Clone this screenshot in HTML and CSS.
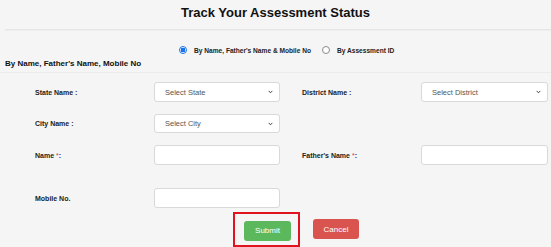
FILE: index.html
```html
<!DOCTYPE html>
<html>
<head>
<meta charset="utf-8">
<link rel="stylesheet" href="styles.css">
</head>
<body>
<h2 class="title">Track Your Assessment Status</h2>
<div class="divider"></div>
<div class="modes">
  <label class="mode"><span class="radio checked"></span><span>By Name, Father's Name &amp; Mobile No</span></label>
  <label class="mode"><span class="radio"></span><span>By Assessment ID</span></label>
</div>
<div class="subhead">By Name, Father's Name, Mobile No</div>
<div class="divider2"></div>
<div class="form">
  <div class="row r1">
    <div class="lbl left">State Name :</div>
    <div class="ctl sel left-ctl"><span>Select State</span><svg width="5" height="4" viewBox="0 0 5 4"><path d="M0.7 0.9 L2.5 2.8 L4.3 0.9" fill="none" stroke="#444" stroke-width="1"/></svg></div>
    <div class="lbl right">District Name :</div>
    <div class="ctl sel right-ctl"><span>Select District</span><svg width="5" height="4" viewBox="0 0 5 4"><path d="M0.7 0.9 L2.5 2.8 L4.3 0.9" fill="none" stroke="#444" stroke-width="1"/></svg></div>
  </div>
  <div class="row r2">
    <div class="lbl left">City Name :</div>
    <div class="ctl sel left-ctl"><span>Select City</span><svg width="5" height="4" viewBox="0 0 5 4"><path d="M0.7 0.9 L2.5 2.8 L4.3 0.9" fill="none" stroke="#444" stroke-width="1"/></svg></div>
  </div>
  <div class="row r3">
    <div class="lbl left">Name <span class="req">*</span>:</div>
    <div class="ctl left-ctl"></div>
    <div class="lbl right">Father's Name <span class="req">*</span>:</div>
    <div class="ctl right-ctl"></div>
  </div>
  <div class="row r4">
    <div class="lbl left">Mobile No.</div>
    <div class="ctl left-ctl"></div>
  </div>
</div>
<div class="actions">
  <div class="highlight"><button class="btn submit">Submit</button></div>
  <button class="btn cancel">Cancel</button>
</div>
</body>
</html>
```
FILE: styles.css
```css
* { box-sizing: border-box; }
body {
  margin: 0;
  background: #f5f5f5;
  font-family: "Liberation Sans", Arial, sans-serif;
  color: #111;
}
.title {
  margin: 0;
  padding-top: 5px;
  font-size: 13px;
  line-height: 15px;
  font-weight: bold;
  text-align: center;
  color: #111;
}
.divider {
  margin: 9px 0 0 5px;
  height: 2px;
  border-top: 1px solid #e6e6e6;
  border-bottom: 1px solid #eeeeee;
}
.modes {
  display: flex;
  align-items: center;
  padding-left: 179px;
  margin-top: 13px;
  height: 12px;
  gap: 11px;
}
.mode {
  display: flex;
  align-items: center;
  gap: 7px;
  font-size: 6.6px;
  font-weight: bold;
  color: #222;
}
.radio {
  width: 8px;
  height: 8px;
  border-radius: 50%;
  border: 1px solid #8a8a8a;
  background: #fff;
}
.radio.checked {
  border: 1px solid #1a73e8;
  background: radial-gradient(circle, #1a73e8 0 2.2px, #fff 2.6px);
}
.subhead {
  margin-top: 3px;
  padding-left: 5px;
  font-size: 8px;
  line-height: 10px;
  font-weight: bold;
  color: #111;
}
.divider2 {
  margin-top: 3px;
  height: 1px;
  background: #ececec;
}
.form {
  padding-left: 35px;
  margin-top: 9px;
}
.row {
  display: grid;
  grid-template-columns: 119px 126px 22px 119px 127px;
  grid-template-rows: 20px;
  align-items: center;
}
.left { grid-column: 1; }
.left-ctl { grid-column: 2; }
.right { grid-column: 4; }
.right-ctl { grid-column: 5; }
.r2 { margin-top: 12px; grid-template-rows: 19px; }
.r3 { margin-top: 12px; }
.r4 { margin-top: 23px; }
.lbl {
  grid-row: 1;
  font-size: 7px;
  font-weight: bold;
  color: #222;
}
.req { color: #e8303a; font-weight: normal; }
.ctl {
  grid-row: 1;
  height: 100%;
  background: #fff;
  border: 1px solid #d9d9d9;
  border-radius: 3px;
}
.sel {
  display: flex;
  align-items: center;
  justify-content: space-between;
  padding: 0 6px 0 10px;
  font-size: 7.5px;
  color: #555;
}
.actions {
  display: flex;
  align-items: center;
  padding-left: 233px;
  margin-top: 4px;
  gap: 13px;
}
.highlight {
  border: 2px solid #e0141e;
  padding: 5px 7px 4px 9px;
}
.btn {
  height: 20px;
  border: none;
  border-radius: 3px;
  color: #fff;
  font-family: "Liberation Sans", Arial, sans-serif;
  font-size: 8px;
  padding: 0;
}
.submit { width: 47px; background: #5cb85c; }
.cancel { width: 46px; background: #d9534f; }
```
